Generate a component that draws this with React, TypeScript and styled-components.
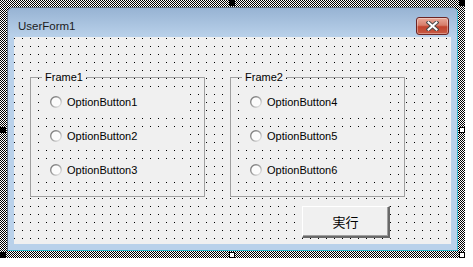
import styled, { createGlobalStyle } from 'styled-components';

const GlobalStyle = createGlobalStyle`
  body {
    margin: 0;
    background: #ffffff;
    font-family: "Liberation Sans", Arial, sans-serif;
  }
`;

// selection band: 1px checkerboard built from two striped layers
const Selection = styled.div`
  position: relative;
  display: inline-block;
  padding: 7px;
  background-image: linear-gradient(to right, #000 1px, #fff 1px);
  background-size: 2px 2px;

  &::after {
    content: '';
    position: absolute;
    inset: 0;
    background-image: linear-gradient(to right, #fff 1px, #000 1px);
    background-size: 2px 2px;
    mask-image: linear-gradient(to bottom, transparent 1px, #000 1px);
    mask-size: 2px 2px;
  }
`;

const Handle = styled.div<{ $x: number; $y: number; $active?: boolean }>`
  position: absolute;
  z-index: 2;
  left: ${(p) => p.$x}px;
  top: ${(p) => p.$y}px;
  width: 6px;
  height: 6px;
  box-sizing: border-box;
  background: ${(p) => (p.$active ? '#ffffff' : '#000000')};
  border: 1px solid #000000;
`;

const Window = styled.div`
  position: relative;
  z-index: 1;
  display: flex;
  flex-direction: column;
  width: 451px;
  height: 244px;
  box-sizing: border-box;
  border: 1px solid;
  border-color: #5f6f80 #33b8cc #33b8cc #5f6f80;
  border-radius: 6px 6px 0 0;
  background: #b9d1ea;
  overflow: hidden;
`;

const TitleBar = styled.div`
  display: flex;
  align-items: center;
  justify-content: space-between;
  height: 29px;
  box-sizing: border-box;
  padding: 6px 8px 0 10px;
  background: linear-gradient(to bottom, #97b3d3, #b9d1ea);
`;

const Title = styled.span`
  padding-top: 1px;
  font-size: 11.5px;
  color: #1b1b1b;
`;

const CloseButton = styled.div`
  display: flex;
  align-items: center;
  justify-content: center;
  width: 33px;
  height: 18px;
  box-sizing: border-box;
  border: 1px solid #6b2424;
  border-radius: 3px;
  background: linear-gradient(
    to bottom,
    #e9a99a 0%,
    #d77e6b 45%,
    #c2432d 55%,
    #c65a44 100%
  );
  box-shadow: inset 0 0 0 1px rgba(255, 255, 255, 0.35);
`;

const Body = styled.div`
  flex: 1;
  display: flex;
  padding: 0 6px 6px 6px;
`;

const Client = styled.div`
  flex: 1;
  display: flex;
  flex-direction: column;
  padding: 40px 0 0 16px;
  background-color: #000000;
  background-image: linear-gradient(to right, transparent 1px, #f0f0f0 1px),
    linear-gradient(to bottom, transparent 1px, #f0f0f0 1px);
  background-size: 8px 8px;
  background-position: 0 1px;
`;

const FrameRow = styled.div`
  display: flex;
  gap: 25px;
`;

const Frame = styled.div`
  position: relative;
  display: flex;
  flex-direction: column;
  gap: 16px;
  width: 175px;
  height: 120px;
  box-sizing: border-box;
  padding: 15px 0 0 15px;
  border: 1px solid #a0a0a0;
`;

const FrameLabel = styled.span`
  position: absolute;
  top: -8px;
  left: 11px;
  padding: 0 3px;
  font-size: 11px;
  line-height: 14px;
  color: #000000;
  background: #f0f0f0;
`;

const Option = styled.div`
  display: flex;
  align-items: center;
  gap: 5px;
  width: 140px;
  height: 18px;
  padding-left: 4px;
  box-sizing: border-box;
  background: #f0f0f0;
  font-size: 11px;
  color: #000000;
`;

const ButtonRow = styled.div`
  display: flex;
  margin: 9px 0 0 272px;
`;

const RunButton = styled.div`
  display: flex;
  align-items: center;
  justify-content: center;
  width: 88px;
  height: 32px;
  box-sizing: border-box;
  background: #f0f0f0;
  border-style: solid;
  border-width: 1px 2px 2px 1px;
  border-color: #ffffff #696969 #696969 #ffffff;
  box-shadow: inset -1px -1px 0 #a0a0a0;
  font-family: "Noto Sans CJK JP", "Liberation Sans", sans-serif;
  font-size: 13px;
  color: #000000;
`;

function Radio() {
  return (
    <svg width="12" height="12" viewBox="0 0 12 12">
      <defs>
        <linearGradient id="ring" x1="0" y1="0" x2="1" y2="1">
          <stop offset="0" stopColor="#6f6f6f" />
          <stop offset="0.55" stopColor="#a8a8a8" />
          <stop offset="1" stopColor="#f4f4f4" />
        </linearGradient>
      </defs>
      <circle cx="6" cy="6" r="5.3" fill="#ffffff" stroke="url(#ring)" strokeWidth="1.4" />
      <circle cx="6" cy="6" r="3.6" fill="#fbfbfb" />
    </svg>
  );
}

function CloseGlyph() {
  return (
    <svg width="13" height="10" viewBox="0 0 13 10">
      <path d="M2.5 1.5 L10.5 8.5 M10.5 1.5 L2.5 8.5" stroke="#4a4a4a" strokeWidth="4" strokeLinecap="square" />
      <path d="M2.5 1.5 L10.5 8.5 M10.5 1.5 L2.5 8.5" stroke="#ffffff" strokeWidth="2" strokeLinecap="square" />
    </svg>
  );
}

const frames = [
  { title: 'Frame1', options: ['OptionButton1', 'OptionButton2', 'OptionButton3'] },
  { title: 'Frame2', options: ['OptionButton4', 'OptionButton5', 'OptionButton6'] },
];

function App() {
  return (
    <>
      <GlobalStyle />
      <Selection>
        <Window>
          <TitleBar>
            <Title>UserForm1</Title>
            <CloseButton>
              <CloseGlyph />
            </CloseButton>
          </TitleBar>
          <Body>
            <Client>
              <FrameRow>
                {frames.map((f) => (
                  <Frame key={f.title}>
                    <FrameLabel>{f.title}</FrameLabel>
                    {f.options.map((o) => (
                      <Option key={o}>
                        <Radio />
                        {o}
                      </Option>
                    ))}
                  </Frame>
                ))}
              </FrameRow>
              <ButtonRow>
                <RunButton>実行</RunButton>
              </ButtonRow>
            </Client>
          </Body>
        </Window>
        <Handle $x={229} $y={0} />
        <Handle $x={459} $y={0} />
        <Handle $x={0} $y={127} />
        <Handle $x={0} $y={252} />
        <Handle $x={459} $y={127} $active />
        <Handle $x={229} $y={252} $active />
        <Handle $x={459} $y={252} $active />
      </Selection>
    </>
  );
}

export default App;
